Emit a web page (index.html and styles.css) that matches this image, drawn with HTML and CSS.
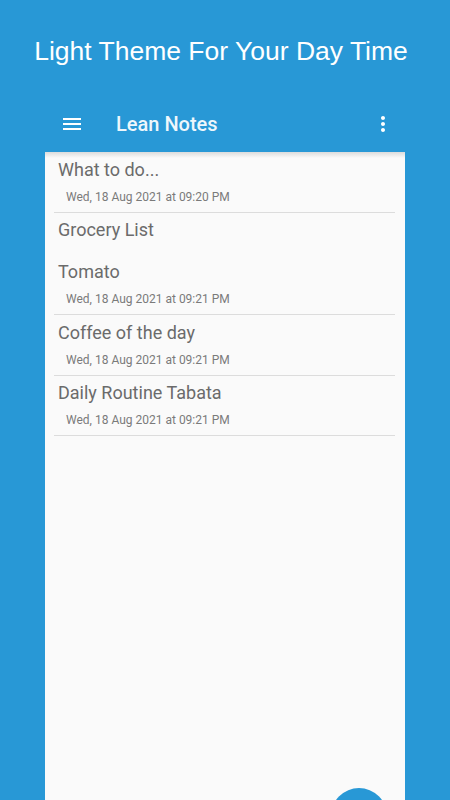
FILE: index.html
```html
<!DOCTYPE html>
<html>
<head>
<meta charset="utf-8">
<link rel="stylesheet" href="styles.css">
</head>
<body>
<div class="page">
  <h1 class="hero">Light Theme For Your Day Time</h1>
  <div class="phone">
    <div class="toolbar">
      <svg class="icon menu" viewBox="0 0 24 24" width="24" height="24"><path d="M3 18h18v-2H3v2zm0-5h18v-2H3v2zm0-7v2h18V6H3z" fill="#fff"/></svg>
      <span class="app-title">Lean Notes</span>
      <svg class="icon more" viewBox="0 0 24 24" width="24" height="24"><path d="M12 8c1.1 0 2-.9 2-2s-.9-2-2-2-2 .9-2 2 .9 2 2 2zm0 2c-1.1 0-2 .9-2 2s.9 2 2 2 2-.9 2-2-.9-2-2-2zm0 6c-1.1 0-2 .9-2 2s.9 2 2 2 2-.9 2-2-.9-2-2-2z" fill="#fff"/></svg>
    </div>
    <div class="list">
      <div class="note">
        <div class="title">What to do...</div>
        <div class="date">Wed, 18 Aug 2021 at 09:20 PM</div>
      </div>
      <div class="note">
        <div class="title">Grocery List</div>
        <div class="title extra">Tomato</div>
        <div class="date">Wed, 18 Aug 2021 at 09:21 PM</div>
      </div>
      <div class="note">
        <div class="title">Coffee of the day</div>
        <div class="date">Wed, 18 Aug 2021 at 09:21 PM</div>
      </div>
      <div class="note">
        <div class="title">Daily Routine Tabata</div>
        <div class="date">Wed, 18 Aug 2021 at 09:21 PM</div>
      </div>
      <div class="fab"></div>
    </div>
  </div>
</div>
</body>
</html>
```
FILE: styles.css
```css
html, body {
  margin: 0;
  padding: 0;
  overflow: hidden;
}
body {
  background: #2898d6;
}
.page {
  display: flex;
  flex-direction: column;
  height: 800px;
  overflow: hidden;
}
.hero {
  margin: 0;
  padding: 36px 8px 30px 0;
  font-family: "Liberation Sans", Arial, sans-serif;
  font-weight: normal;
  font-size: 26.5px;
  line-height: 30px;
  color: #ffffff;
  text-align: center;
}
.phone {
  margin: 0 45px;
  flex: 1;
  display: flex;
  flex-direction: column;
  min-height: 0;
}
.toolbar {
  height: 56px;
  flex: none;
  display: flex;
  align-items: center;
  padding: 0 10px 0 15px;
}
.icon {
  display: block;
  flex: none;
}
.app-title {
  margin-left: 32px;
  flex: 1;
  font-family: Roboto, "Noto Sans", sans-serif;
  font-weight: 500;
  font-size: 20px;
  color: #eef7fc;
}
.list {
  position: relative;
  flex: 1;
  background: #fafafa linear-gradient(to bottom, rgba(0,0,0,0.12), rgba(0,0,0,0) 6px);
  padding: 0 10px 0 9px;
}
.note {
  padding: 5.5px 0 7px;
  border-bottom: 1px solid #dcdcdc;
  font-family: Roboto, "Noto Sans", sans-serif;
}
.title {
  padding-left: 4px;
  font-size: 18px;
  line-height: 24px;
  color: #6b6b6b;
}
.title.extra {
  margin-top: 18px;
}
.date {
  margin-top: 7px;
  padding-left: 12px;
  font-size: 12px;
  line-height: 16px;
  color: #7a7a7a;
}
.fab {
  position: absolute;
  left: 286px;
  top: 636px;
  width: 56px;
  height: 56px;
  border-radius: 50%;
  background: #2898d6;
}
```
